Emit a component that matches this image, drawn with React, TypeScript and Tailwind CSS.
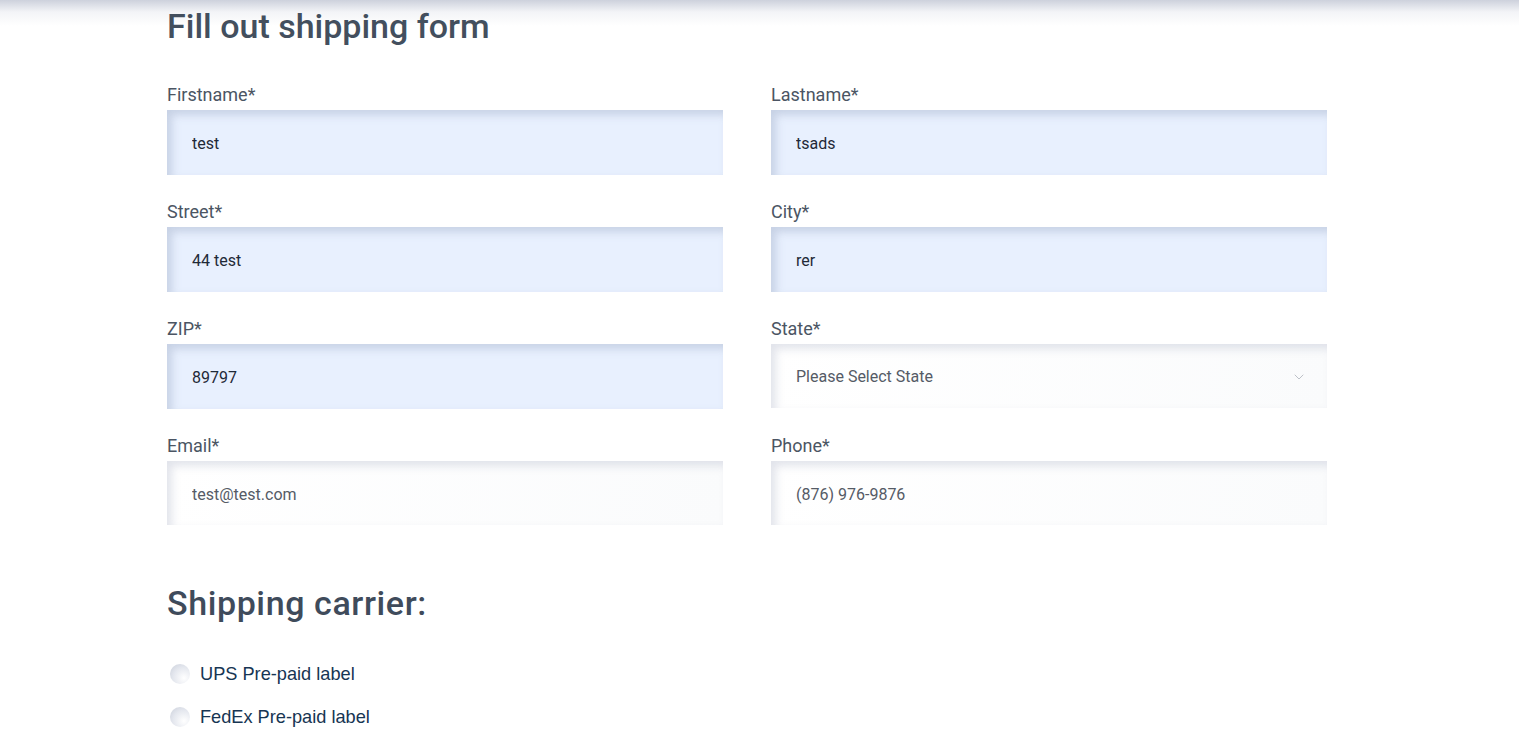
import { ChevronDown } from 'lucide-react';

const fields = [
  { label: 'Firstname*', value: 'test', filled: true },
  { label: 'Lastname*', value: 'tsads', filled: true },
  { label: 'Street*', value: '44 test', filled: true },
  { label: 'City*', value: 'rer', filled: true },
  { label: 'ZIP*', value: '89797', filled: true },
  { label: 'State*', value: 'Please Select State', select: true },
  { label: 'Email*', value: 'test@test.com' },
  { label: 'Phone*', value: '(876) 976-9876' },
];

function Field({ label, value, filled, select }: { label: string; value: string; filled?: boolean; select?: boolean }) {
  return (
    <div className="flex flex-col">
      <label className="mb-[2px] text-[18px] leading-[26px] text-[#4b5563]">{label}</label>
      {select ? (
        <div className="flex h-[64px] items-center justify-between bg-[linear-gradient(100deg,#ffffff,#fafbfc)] pl-[25px] pr-[20px] pt-[2px] text-[16px] text-[#555b66] shadow-[inset_5px_5px_9px_rgba(190,196,210,0.45)]">
          <span>{value}</span>
          <ChevronDown className="h-[16px] w-[16px] text-[#adb2ba]" strokeWidth={1.2} />
        </div>
      ) : (
        <input
          readOnly
          value={value}
          className={
            filled
              ? 'h-[65px] w-full bg-[#e8f0fe] px-[25px] pt-[2px] text-[16px] text-[#1f2937] shadow-[inset_5px_5px_9px_rgba(160,172,200,0.45)] outline-none'
              : 'h-[64px] w-full bg-[linear-gradient(100deg,#ffffff,#fafbfc)] px-[25px] pt-[2px] text-[16px] text-[#555b66] shadow-[inset_5px_5px_9px_rgba(190,196,210,0.45)] outline-none'
          }
        />
      )}
    </div>
  );
}

export default function App() {
  return (
    <div className="min-h-[749px] bg-[linear-gradient(to_bottom,#cdd1dc_0px,#f3f4f7_12px,#ffffff_26px)] font-['Roboto',sans-serif]">
      <div className="ml-[167px] w-[1160px]">
        <h1 className="pt-[4px] text-[34px] font-medium leading-[44px] tracking-[0px] text-[#434f5e]">
          Fill out shipping form
        </h1>
        <div className="mt-[34px] grid grid-cols-2 gap-x-[48px] gap-y-[24px]">
          {fields.map((f) => (
            <Field key={f.label} {...f} />
          ))}
        </div>
        <h2 className="mt-[56px] text-[34px] font-medium leading-[44px] tracking-[0.6px] text-[#3f4b5b]">
          Shipping carrier:
        </h2>
        <div className="mt-[37px] flex flex-col gap-[19px] font-['Liberation_Sans',sans-serif]">
          {['UPS Pre-paid label', 'FedEx Pre-paid label'].map((t) => (
            <label key={t} className="flex items-center gap-[10px] pl-[3px] text-[18.2px] leading-[24px] text-[#173553]">
              <span className="h-[20px] w-[20px] rounded-full bg-[radial-gradient(circle_at_70%_70%,#ffffff_0%,#e4e7ee_55%,#c9ced9_100%)]" />
              {t}
            </label>
          ))}
        </div>
      </div>
    </div>
  );
}
